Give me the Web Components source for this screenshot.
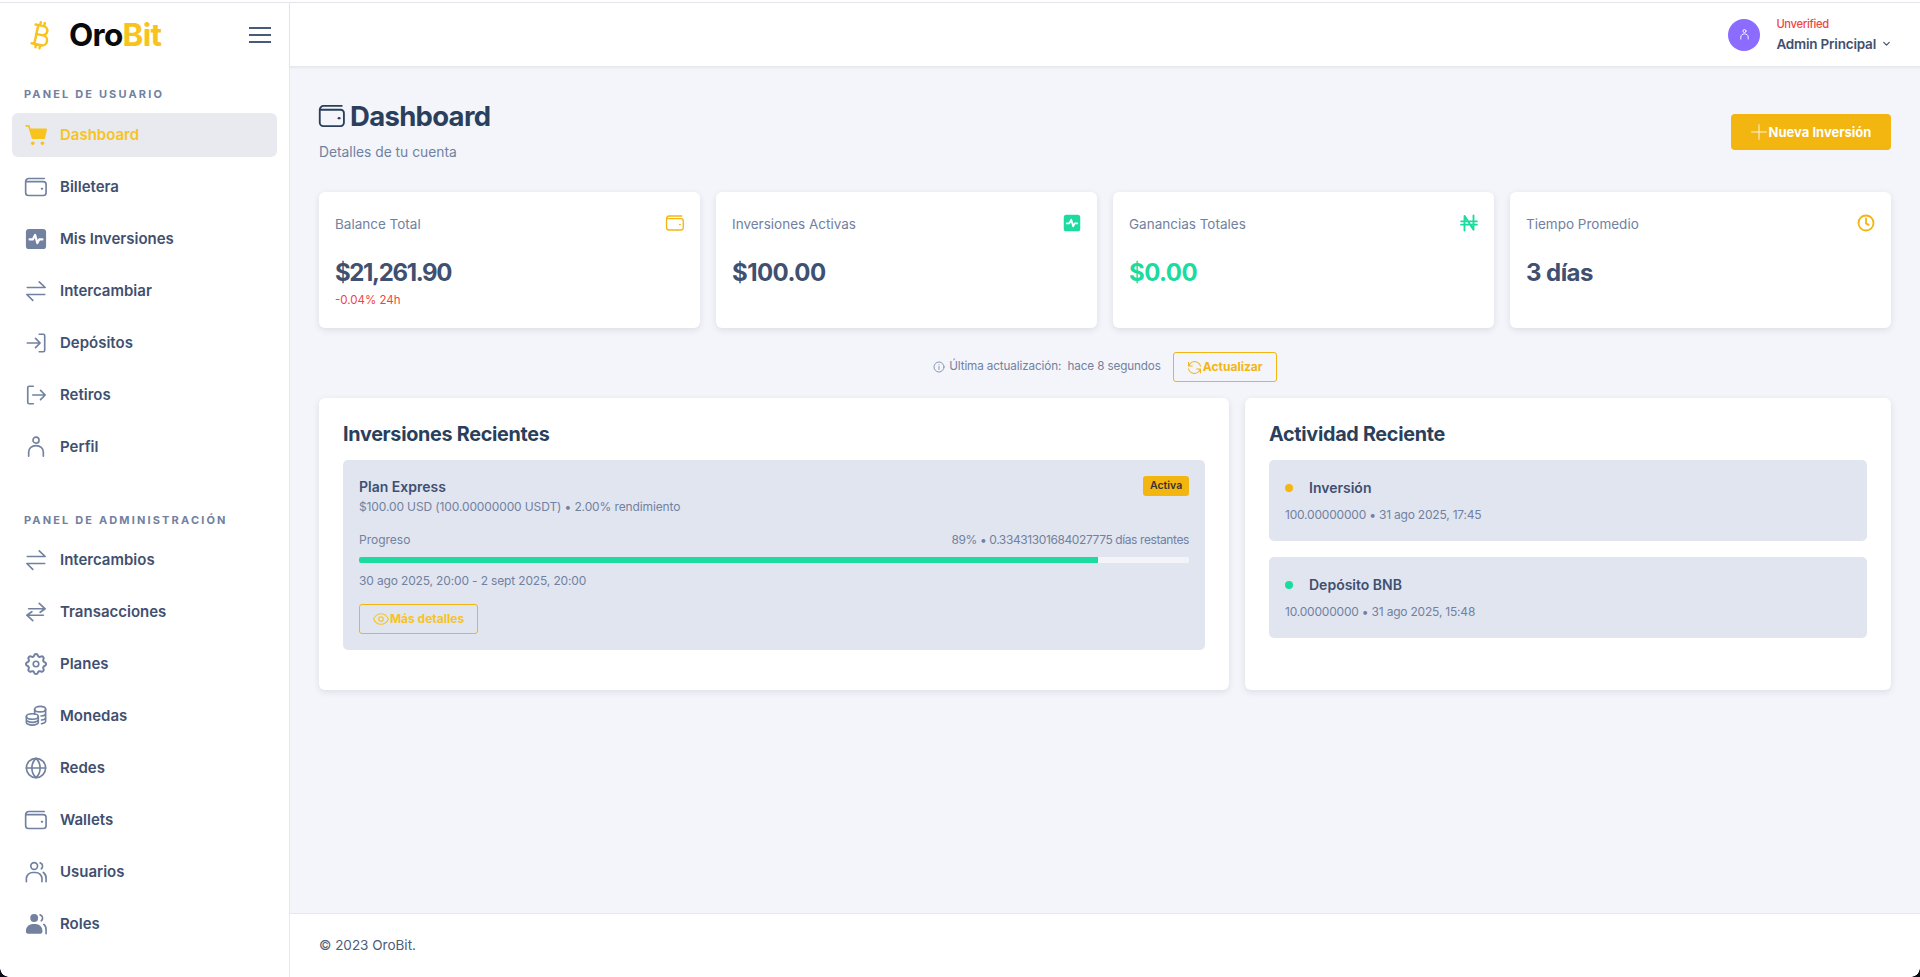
<!DOCTYPE html>
<html lang="es"><head><meta charset="utf-8"><title>OroBit</title>
<style>
html,body{margin:0;height:100%;overflow:hidden;background:#fff}
body{font-family:Inter,"Noto Sans",sans-serif}
</style></head><body>
<app-shell>
  <side-bar slot="side">
    <sec-label>PANEL DE USUARIO</sec-label>
    <nav-item icon="cart" active>Dashboard</nav-item>
    <nav-item icon="wallet">Billetera</nav-item>
    <nav-item icon="activity">Mis Inversiones</nav-item>
    <nav-item icon="swap">Intercambiar</nav-item>
    <nav-item icon="login">Depósitos</nav-item>
    <nav-item icon="logout">Retiros</nav-item>
    <nav-item icon="user">Perfil</nav-item>
    <sec-label second>PANEL DE ADMINISTRACIÓN</sec-label>
    <nav-item icon="swap">Intercambios</nav-item>
    <nav-item icon="swap2">Transacciones</nav-item>
    <nav-item icon="gear">Planes</nav-item>
    <nav-item icon="coins">Monedas</nav-item>
    <nav-item icon="globe">Redes</nav-item>
    <nav-item icon="wallet">Wallets</nav-item>
    <nav-item icon="users">Usuarios</nav-item>
    <nav-item icon="usersf">Roles</nav-item>
  </side-bar>
  <top-bar slot="top"></top-bar>
  <page-head></page-head>
  <stat-grid>
    <stat-card label="Balance Total" value="$21,261.90" icon="wallet" sub="-0.04% 24h" style="--ls:-1.37px"></stat-card>
    <stat-card label="Inversiones Activas" value="$100.00" icon="activity" tone="g"></stat-card>
    <stat-card label="Ganancias Totales" value="$0.00" icon="naira" tone="g" green></stat-card>
    <stat-card label="Tiempo Promedio" value="3 días" icon="clock"></stat-card>
  </stat-grid>
  <refresh-row></refresh-row>
  <two-col>
    <panel-card title="Inversiones Recientes"><invest-item></invest-item></panel-card>
    <panel-card title="Actividad Reciente">
      <activity-item name="Inversión" meta="100.00000000 • 31 ago 2025, 17:45"></activity-item>
      <activity-item green name="Depósito BNB" meta="10.00000000 • 31 ago 2025, 15:48"></activity-item>
    </panel-card>
  </two-col>
  <app-footer slot="foot"></app-footer>
</app-shell>
<script>
const ICONS={
 wallet:'<path d="M.7 6.2V18a3.300 3.300 0 0 0 3.300 3.300h16a3 3 0 0 0 3-3V9.200a3 3 0 0 0-3-3H.7zM.7 6.200A3.500 3.500 0 0 1 4.200 2.700H21"/><path stroke-width="2.200" d="M18.300 14h.5"/>',
 cart:'<path fill="currentColor" stroke="none" d="M.5 1h3.700c.5 0 .9.3 1 .8L5.900 5H23c.6 0 1 .6.9 1.200l-2 9.300c-.1.500-.5.800-1 .800H8.300c-.5 0-.9-.3-1-.8L3.500 2.900H.5z"/><circle cx="8.500" cy="21" r="2" fill="currentColor" stroke="none"/><circle cx="19" cy="21" r="2" fill="currentColor" stroke="none"/>',
 activity:'<rect x="1" y="1" width="22" height="22" rx="3.500" fill="currentColor" stroke="none"/><path stroke="#fff" stroke-width="2.400" d="M5 12.500h3.500l2.500-5 2.500 9 2-4H19"/>',
 swap:'<path d="M2.500 8.200H22L15.500 2M21.500 15.800H2L8.500 22.200"/>',
 swap2:'<path d="M4 8.500H22L15.500 2.500M22 8.500l-5.500 3.800M20 15.500H2L8.500 21.500M2 15.500l5.500-3.800"/>',
 login:'<path d="M2.500 12h14M11.500 7l5 5-5 5M15.500 2.500h4.500a1.500 1.500 0 0 1 1.500 1.500v16a1.500 1.500 0 0 1-1.500 1.500h-4.500"/>',
 logout:'<path d="M9 2.500H4.500A1.500 1.500 0 0 0 3 4v16a1.500 1.500 0 0 0 1.500 1.500H9M8.500 12H22M17 7l5 5-5 5"/>',
 user:'<circle cx="12" cy="4.500" r="3.300"/><path d="M4 22v-4.500c0-4 3.500-7 8-7s8 3 8 7V22"/>',
 gear:'<path d="M10.325 4.317c.426-1.756 2.924-1.756 3.35 0a1.724 1.724 0 0 0 2.573 1.066c1.543-.94 3.31.826 2.37 2.37a1.724 1.724 0 0 0 1.065 2.572c1.756.426 1.756 2.924 0 3.35a1.724 1.724 0 0 0-1.066 2.573c.94 1.543-.826 3.31-2.37 2.37a1.724 1.724 0 0 0-2.572 1.065c-.426 1.756-2.924 1.756-3.35 0a1.724 1.724 0 0 0-2.573-1.066c-1.543.94-3.31-.826-2.37-2.37a1.724 1.724 0 0 0-1.065-2.572c-1.756-.426-1.756-2.924 0-3.35a1.724 1.724 0 0 0 1.066-2.573c-.94-1.543.826-3.31 2.37-2.37.996.608 2.296.07 2.572-1.065z" transform="translate(-2.600 -2.600) scale(1.220)"/><circle cx="12" cy="12" r="3"/>',
 coins:'<ellipse cx="16.500" cy="4.500" rx="6" ry="3"/><path d="M10.500 4.500v5M22.500 4.500v13c0 1.400-1.800 2.600-4.500 3M22.500 9c0 1.400-2 2.700-5 3M22.500 13.500c0 1.400-1.800 2.500-4.500 2.900"/><ellipse cx="8" cy="12.500" rx="6.500" ry="3"/><path d="M1.500 12.500V19c0 1.600 3 3 6.500 3s6.500-1.400 6.500-3v-6.500M1.500 16c0 1.600 3 3 6.500 3s6.500-1.400 6.500-3"/>',
 globe:'<circle cx="12" cy="12" r="10.500"/><path d="M1.500 12h21M12 1.500c-6 5.500-6 15.500 0 21M12 1.500c6 5.500 6 15.500 0 21"/>',
 users:'<circle cx="10" cy="5.500" r="3.700"/><path d="M1.500 22.500V19a7 7 0 0 1 7-6.500h3a7 7 0 0 1 7 6.500v3.500M16.500 2a3.700 3.700 0 0 1 1.200 6.500M20 12.500a7 7 0 0 1 3 6v4"/>',
 usersf:'<circle cx="10" cy="5.500" r="4.300" fill="currentColor" stroke="none"/><path fill="currentColor" stroke="none" d="M1 19a7.500 7.500 0 0 1 7.500-7h3a7.500 7.500 0 0 1 7.500 7v1.500c0 1.200-1 2-2 2H3c-1 0-2-.8-2-2z"/><path d="M16.500 2a3.700 3.700 0 0 1 1.200 6.500M20.500 12.500a7 7 0 0 1 2.500 6v4"/>',
 naira:'<path stroke-width="2.500" d="M6 22V2.500L18 21V2M1.500 9.800h21M1.500 14.200h21"/>',
 clock:'<circle cx="12" cy="12" r="10" stroke-width="2.400"/><path stroke-width="2.400" d="M12 6v6.500l3.500 2"/>',
 info:'<circle cx="12" cy="12" r="10"/><path d="M12 11v6M12 7.500v.3"/>',
 refresh:'<path d="M21.500 10A9.500 9.500 0 0 0 4.500 6.500L2.500 9M2.500 3.500V9.500H8.500M2.500 14A9.500 9.500 0 0 0 19.500 17.500l2-2.500M21.500 20.500v-6H15.500"/>',
 eye:'<path d="M.8 12C3.500 6.500 7.300 4 12 4s8.500 2.500 11.200 8C20.500 17.500 16.700 20 12 20S3.500 17.500.8 12z"/><circle cx="12" cy="12" r="3.500"/>',
 plus:'<path d="M12 1v22M1 12h22"/>',
 chevron:'<path d="M6 9.500l6 6 6-6"/>',
 btc:'<g transform="rotate(12 12 12)"><path d="M6 1.500h9a5 5 0 0 1 0 10H8.500h8a5.500 5.500 0 0 1 0 11H6M9 1.500v21M11 -2v3.500M15.500 -2v3.500M11 22.500V26M15.500 22.500V26"/></g>'
};
function svg(n,w,h,sw=1.5,extra=''){return `<svg xmlns="http://www.w3.org/2000/svg" viewBox="0 0 24 24" width="${w}" height="${h||w}" fill="none" stroke="currentColor" stroke-width="${sw}" stroke-linecap="round" stroke-linejoin="round" style="display:block;flex:none;overflow:visible;${extra}">${ICONS[n]}</svg>`}
class Base extends HTMLElement{
  constructor(){super();this.attachShadow({mode:'open'})}
  connectedCallback(){this.shadowRoot.innerHTML=`<style>${this.css()}</style>${this.html()}`}
  a(n){return this.getAttribute(n)||''}
  css(){return ''} html(){return '<slot></slot>'}
}
const def=(n,o)=>customElements.define(n,class extends Base{css(){return o.css}html(){return o.html?o.html.call(this):'<slot></slot>'}});
def('app-shell',{css:`
 :host{display:grid;grid-template-columns:290px 1fr;grid-template-rows:65px 1fr 64px;height:100vh;box-sizing:border-box;border-top:2px solid #fff;background:#f3f5fa;position:relative}
 .side{grid-row:1/4;min-height:0}.top{grid-column:2}.main{grid-column:2;padding:29px 29px 0;min-height:0;overflow:hidden}.foot{grid-column:2}
 .corner{position:absolute;left:0;bottom:0;width:9px;height:9px;background:radial-gradient(circle at 100% 0,transparent 8.500px,#0a0f1a 9px)}
 .corner.r{left:auto;right:0;background:radial-gradient(circle at 0 0,transparent 8.500px,#0a0f1a 9px)}
 `,html(){return `<div class="side"><slot name="side"></slot></div><div class="top"><slot name="top"></slot></div><div class="main"><slot></slot></div><div class="foot"><slot name="foot"></slot></div><div class="corner"></div><div class="corner r"></div>`}});
def('side-bar',{css:`:host{display:block;height:100%;box-sizing:border-box;background:#fff;border-right:1px solid #e6e8f0;border-top:1px solid #e4e4ee}
 .brand{display:flex;align-items:center;height:64px;padding:0 18px 0 28px;justify-content:space-between}
 .logo{display:flex;align-items:center;gap:19px;color:#f8c31c}
 .name{font:700 31.500px/1 Inter,sans-serif;letter-spacing:-.7px;color:#0a0a0a}.name b{font-weight:700;color:#f8c31c}
 .burger{width:22px;height:16px;display:flex;flex-direction:column;justify-content:space-between}
 .burger i{display:block;height:2px;background:#475a7a}
 nav{padding:0 12px;}`,html(){return `<div class="brand"><div class="logo">${svg('btc',22,22,2.700)}<span class="name">Oro<b>Bit</b></span></div><div class="burger"><i></i><i></i><i></i></div></div><nav><slot></slot></nav>`}});
def('sec-label',{css:`:host{display:block;font:700 11px/14px Inter,sans-serif;letter-spacing:2.150px;color:#71819f;padding:20px 12px 12px}
 :host([second]){padding:36px 12px 11px}`});
def('nav-item',{css:`:host{display:flex;align-items:center;height:44px;box-sizing:border-box;padding:0 13px 1px;margin-bottom:8px;border-radius:6px;gap:13px;color:#3f5070;font:600 15px/1 Inter,sans-serif}
 :host([active]){background:#e8eaef;color:#f8c31c}
 .ic{color:#71819f;width:22px;display:flex;justify-content:center}:host([active]) .ic{color:#f8c31c}`,
 html(){return `<span class="ic">${svg(this.a('icon'),22,22,1.800)}</span><slot></slot>`}});
def('top-bar',{css:`:host{display:flex;height:65px;box-sizing:border-box;align-items:center;justify-content:flex-end;background:#fff;border-top:1px solid #e4e4ee;border-bottom:1px solid #e6e8f0;padding:0 28px 0 0;box-shadow:0 1px 2px rgba(40,50,80,.06);position:relative}
 .av{width:32px;height:32px;border-radius:50%;background:#8b6cff;color:#fff;display:flex;align-items:center;justify-content:center;margin-right:16px}
 .u{color:#ef4444;font:500 11.200px/14px Inter,sans-serif;letter-spacing:-.3px}
 .n{display:flex;align-items:center;gap:5px;color:#3f5070;font:600 13.500px/18px Inter,sans-serif;letter-spacing:-.2px;margin-top:4px}
 .i{color:#3f5070}`,html(){return `<div class="av">${svg('user',11,11,2)}</div><div><div class="u">Unverified</div><div class="n">Admin Principal<span class="i">${svg('chevron',11,11,2.600)}</span></div></div>`}});
def('page-head',{css:`:host{display:flex;justify-content:space-between;align-items:flex-start;height:96px}
 h1{margin:0;display:flex;align-items:center;gap:5px;font:700 27.500px/40px Inter,sans-serif;letter-spacing:-.7px;color:#2a3f5c}
 p{margin:5.500px 0 0;font:400 13.800px/20px Inter,sans-serif;color:#71819f}
 button{all:unset;box-sizing:border-box;width:160px;height:36px;margin-top:18px;background:#f3b50f;border-radius:4px;color:#fff;font:700 13px/1 Inter,sans-serif;display:flex;align-items:center;justify-content:center;gap:2px}`,
 html(){return `<div><h1>${svg('wallet',26,26,1.700)}Dashboard</h1><p>Detalles de tu cuenta</p></div><button>${svg('plus',16,16,1.300)}Nueva Inversión</button>`}});
def('stat-grid',{css:`:host{display:grid;grid-template-columns:repeat(4,1fr);gap:16px}`});
def('stat-card',{css:`:host{display:flex;flex-direction:column;height:136px;box-sizing:border-box;background:#fff;border-radius:6px;box-shadow:0 2px 6px rgba(50,60,90,.12);padding:20px 16px}
 .h{display:flex;justify-content:space-between;align-items:flex-start;height:22px}
 .l{font:400 13.500px/22px Inter,sans-serif;color:#71819f;padding-top:1px}
 .ic{color:#f3b50f;padding-top:2px}:host([tone=g]) .ic{color:#1bdb9f}
 .v{font:700 24px/34px Inter,sans-serif;letter-spacing:var(--ls,-.55px);color:#3f5070;margin-top:21.500px}:host([green]) .v{color:#1bdb9f}
 .s{font:400 11.500px/16px Inter,sans-serif;color:#ef4444;margin-top:2.500px}`,
 html(){const s=this.a('sub');return `<div class="h"><span class="l">${this.a('label')}</span><span class="ic">${svg(this.a('icon'),18,18,1.800)}</span></div><div class="v">${this.a('value')}</div>${s?`<div class="s">${s}</div>`:''}`}});
def('refresh-row',{css:`:host{display:flex;align-items:center;justify-content:center;gap:12px;height:30px;margin:24px 0 16px;color:#71819f;font:400 11.700px/1 Inter,sans-serif}
 .t{display:flex;align-items:center;gap:4px;white-space:pre;letter-spacing:-.12px}
 button{all:unset;box-sizing:border-box;width:104px;height:30px;border:1px solid #f3b50f;border-radius:3px;color:#f3b50f;font:700 12px/1 Inter,sans-serif;display:flex;align-items:center;justify-content:center;gap:1px}`,
 html(){return `<span class="t">${svg('info',12,12,1.600)}Última actualización:  hace 8 segundos</span><button>${svg('refresh',15,15,1.700)}Actualizar</button>`}});
def('two-col',{css:`:host{display:grid;grid-template-columns:910fr 646fr;gap:16px;height:292px}`});
def('panel-card',{css:`:host{display:block;background:#fff;border-radius:6px;box-shadow:0 2px 6px rgba(50,60,90,.12);padding:22.500px 24px 0;box-sizing:border-box;height:292px}
 h2{margin:0 0 13.500px;font:700 19.800px/26px Inter,sans-serif;letter-spacing:-.3px;color:#2a3f5c}
 .w{display:flex;flex-direction:column;gap:16px}`,html(){return `<h2>${this.a('title')}</h2><div class="w"><slot></slot></div>`}});
def('invest-item',{css:`:host{display:block;height:190px;box-sizing:border-box;background:#e1e5f0;border-radius:5px;padding:16px;color:#71819f;font:400 12px/16px Inter,sans-serif}
 .r{display:flex;justify-content:space-between;align-items:flex-start}
 b{display:block;font:600 14px/20px Inter,sans-serif;color:#3f5070;margin-top:1px}
 .a{background:#f3b50f;color:#333;font:600 10.500px/20px Inter,sans-serif;padding:0 7px;height:20px;border-radius:3px;width:32px;text-align:center}
 .m{margin-top:2px;letter-spacing:-.12px}
 .p{margin-top:17px}.p span:last-child{letter-spacing:-.4px}
 .tr{height:6px;background:#f3f4f9;border-radius:2px;margin-top:9px;overflow:hidden}.tr i{display:block;height:100%;width:89%;background:#1bdb9f}
 .d{margin-top:10px;letter-spacing:-.15px}
 button{all:unset;box-sizing:border-box;width:119px;height:30px;margin-top:15px;border:1px solid #f3b50f;border-radius:3px;color:#f8c31c;font:700 12px/1 Inter,sans-serif;display:flex;align-items:center;justify-content:center;gap:1px}`,
 html(){return `<div class="r"><b>Plan Express</b><span class="a">Activa</span></div><div class="m">$100.00 USD (100.00000000 USDT) • 2.00% rendimiento</div><div class="r p"><span>Progreso</span><span>89% • 0.33431301684027775 días restantes</span></div><div class="tr"><i></i></div><div class="d">30 ago 2025, 20:00 - 2 sept 2025, 20:00</div><button>${svg('eye',16,16,1.600)}Más detalles</button>`}});
def('activity-item',{css:`:host{display:block;height:81px;box-sizing:border-box;background:#e1e5f0;border-radius:5px;padding:16px;color:#71819f;font:400 12px/16px Inter,sans-serif}
 .r{display:flex;align-items:center;gap:16px;font:600 14px/20px Inter,sans-serif;color:#3f5070;margin-top:2px}
 .r i{width:8px;height:8px;border-radius:50%;background:#f3b50f;flex:none}:host([green]) .r i{background:#1bdb9f}
 .m{margin-top:9px;letter-spacing:-.2px}`,html(){return `<div class="r"><i></i>${this.a('name')}</div><div class="m">${this.a('meta')}</div>`}});
def('app-footer',{css:`:host{display:flex;align-items:center;height:64px;box-sizing:border-box;background:#fff;border-top:1px solid #e6e8f0;padding:0 29px;color:#4e5d78;font:400 13.500px/1 Inter,sans-serif}`,html(){return `© 2023 OroBit.`}});
</script>
</body></html>
